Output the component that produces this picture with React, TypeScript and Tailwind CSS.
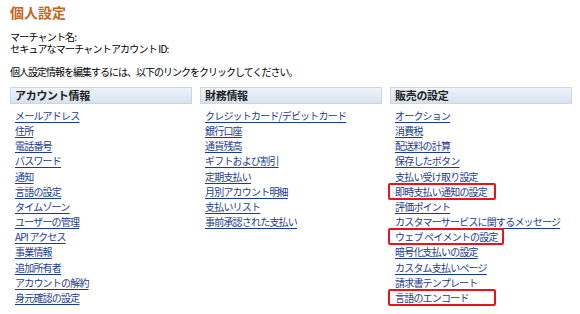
import React from "react"

const FONT = { fontFamily: '"Noto Sans CJK JP", "Noto Sans", sans-serif' }

type Item = { label: string; marked?: boolean }

const COLUMNS: { title: string; items: Item[] }[] = [
  {
    title: "アカウント情報",
    items: [
      { label: "メールアドレス" },
      { label: "住所" },
      { label: "電話番号" },
      { label: "パスワード" },
      { label: "通知" },
      { label: "言語の設定" },
      { label: "タイムゾーン" },
      { label: "ユーザーの管理" },
      { label: "API アクセス" },
      { label: "事業情報" },
      { label: "追加所有者" },
      { label: "アカウントの解約" },
      { label: "身元確認の設定" },
    ],
  },
  {
    title: "財務情報",
    items: [
      { label: "クレジットカード/デビットカード" },
      { label: "銀行口座" },
      { label: "通貨残高" },
      { label: "ギフトおよび割引" },
      { label: "定期支払い" },
      { label: "月別アカウント明細" },
      { label: "支払いリスト" },
      { label: "事前承認された支払い" },
    ],
  },
  {
    title: "販売の設定",
    items: [
      { label: "オークション" },
      { label: "消費税" },
      { label: "配送料の計算" },
      { label: "保存したボタン" },
      { label: "支払い受け取り設定" },
      { label: "即時支払い通知の設定", marked: true },
      { label: "評価ポイント" },
      { label: "カスタマーサービスに関するメッセージ" },
      { label: "ウェブ ペイメントの設定", marked: true },
      { label: "暗号化支払いの設定" },
      { label: "カスタム支払いページ" },
      { label: "請求書テンプレート" },
      { label: "言語のエンコード", marked: true },
    ],
  },
]

function SettingsColumn({ title, items }: { title: string; items: Item[] }) {
  return (
    <div className="flex flex-col">
      <div className="flex h-[17px] items-center border border-[#c8d6e8] bg-gradient-to-b from-[#eef3f9] to-[#d8e3f0] pl-[4px] text-[11px] font-bold tracking-[-0.3px] text-[#222]">
        {title}
      </div>
      <ul className="mt-[4px] flex flex-col pl-[5px]">
        {items.map((item) => (
          <li key={item.label} className="h-[15.17px] text-[10px] leading-[15px] tracking-[-0.8px]">
            <span className="relative inline-block">
              <a href="#" className="whitespace-nowrap text-[#1b3b8c] underline underline-offset-[2px]">
                {item.label}
              </a>
              {item.marked && (
                <span className="pointer-events-none absolute -left-[7px] -right-[6px] -top-[1px] h-[17px] min-w-[108px] rounded-[2px] border-2 border-[#e8141c]" />
              )}
            </span>
          </li>
        ))}
      </ul>
    </div>
  )
}

export default function App() {
  return (
    <div className="h-[314px] w-[580px] overflow-hidden bg-white text-black" style={FONT}>
      <div className="px-[10px] pt-[2px]">
        <h1 className="text-[14px] font-bold leading-[20px] text-[#c4661e]">個人設定</h1>
        <div className="mt-[9px] text-[10px] leading-[12px] tracking-[-0.8px]">
          <p>マーチャント名:</p>
          <p>セキュアなマーチャントアカウント ID:</p>
        </div>
        <p className="mt-[11px] text-[10px] leading-[12px] tracking-[-1px]">
          個人設定情報を編集するには、以下のリンクをクリックしてください。
        </p>
        <div className="mt-[9px] grid grid-cols-[182px_182px_182px] gap-x-[8px]">
          {COLUMNS.map((col) => (
            <SettingsColumn key={col.title} title={col.title} items={col.items} />
          ))}
        </div>
      </div>
    </div>
  )
}
